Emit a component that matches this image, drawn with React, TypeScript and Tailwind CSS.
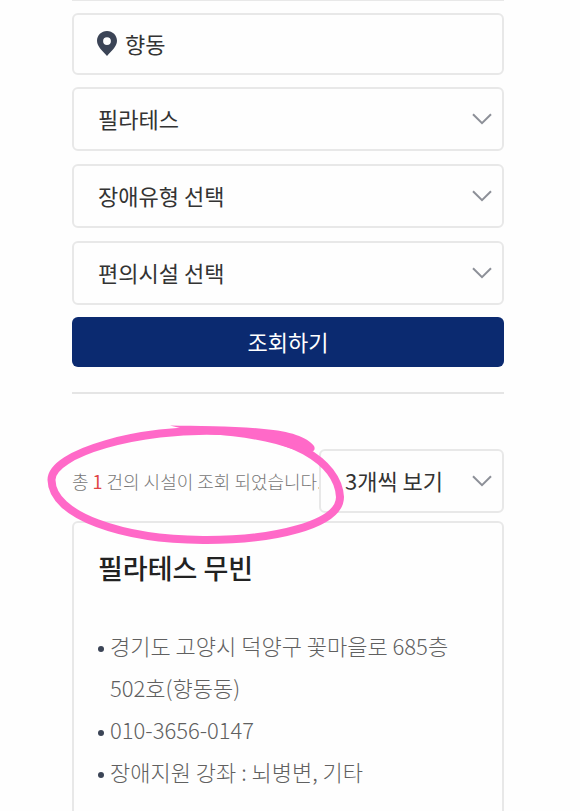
import { useState } from "react";

type Option = { value: string; label: string };

const filters: { name: string; label: string; options: Option[] }[] = [
  { name: "sport", label: "종목", options: [{ value: "pilates", label: "필라테스" }] },
  { name: "disability", label: "장애유형", options: [{ value: "", label: "장애유형 선택" }] },
  { name: "amenity", label: "편의시설", options: [{ value: "", label: "편의시설 선택" }] },
];

const details = [
  "경기도 고양시 덕양구 꽃마을로 685층 502호(향동동)",
  "010-3656-0147",
  "장애지원 강좌 : 뇌병변, 기타",
];

function SelectBox({ name, label, options }: { name: string; label: string; options: Option[] }) {
  return (
    <div className="grid w-full items-center">
      <select
        name={name}
        aria-label={label}
        className="col-start-1 row-start-1 h-16 w-full appearance-none rounded-md border-2 border-[#e8e8e8] bg-transparent px-6 pb-0.5 text-[22px] text-[#333]"
      >
        {options.map((option) => (
          <option key={option.value} value={option.value}>
            {option.label}
          </option>
        ))}
      </select>
      <svg
        viewBox="0 0 20 12"
        className="pointer-events-none col-start-1 row-start-1 mr-3 h-3 w-5 justify-self-end"
        fill="none"
        stroke="#8d9098"
        strokeWidth="2"
      >
        <path d="M1 1.2 10 10.2 19 1.2" />
      </svg>
    </div>
  );
}

function PinIcon() {
  return (
    <svg viewBox="0 0 20 25" className="h-[25px] w-5 shrink-0" fill="#3b4456">
      <path
        fillRule="evenodd"
        d="M10 0C4.400 0 0 4.400 0 9.800c0 6 6.200 10.700 10 15.200 3.800-4.500 10-9.200 10-15.200C20 4.400 15.600 0 10 0Zm0 6.200a3.900 3.900 0 1 1 0 7.800 3.900 3.900 0 0 1 0-7.800Z"
      />
    </svg>
  );
}

// hand-drawn marker ring around the result count
function MarkerRing() {
  return (
    <svg
      viewBox="0 0 304 128"
      className="pointer-events-none absolute -top-7 -left-6 h-32 w-[304px] overflow-visible"
      fill="none"
      stroke="#ff69c8"
      strokeWidth="8"
    >
      <path d="M172 10C92 7 3 32 3.500 59C4 95 75 118.500 155 119C225 119.500 292 104 292 76C290 40 240 11 172 10Z" />
      <path
        d="M122 4.500C150 5 190 5 216 8C242 10 259 16 266 25C268 29 265 32 260 30C256 27 250 23 243 22L247 29C225 21 195 15 160 13L140 9Z"
        fill="#ff69c8"
        stroke="none"
      />
    </svg>
  );
}

export default function App() {
  const [area, setArea] = useState("향동");

  return (
    <main className="bg-[#fefefe] pr-[76px] pl-[72px] font-['Noto_Sans_CJK_KR','Noto_Sans',sans-serif] text-[#333]">
      <form className="border-t border-[#e8e8e8]" onSubmit={(e) => e.preventDefault()}>
        <div className="my-3 flex h-[62px] items-center gap-2 rounded-md border-2 border-[#e8e8e8] px-[23px] pb-0.5">
          <PinIcon />
          <input
            type="text"
            aria-label="지역"
            value={area}
            onChange={(e) => setArea(e.target.value)}
            className="w-full min-w-0 bg-transparent text-[22px] outline-none"
          />
        </div>
        <div className="flex flex-col gap-[13px]">
          {filters.map((filter) => (
            <SelectBox key={filter.name} {...filter} />
          ))}
        </div>
        <button type="submit" className="mt-3 h-[50px] w-full rounded-md bg-[#0b2a70] pb-0.5 text-[22px] text-white">
          조회하기
        </button>
      </form>

      <section className="mt-[25px] border-t-2 border-[#e5e5e5] pt-[55px]">
        <div className="relative flex items-center">
          <p className="w-0 grow text-lg font-light whitespace-nowrap text-[#777]">
            총 <span className="font-normal text-[#e04545]">1</span> 건의 시설이 조회 되었습니다.
          </p>
          <div className="w-[185px] shrink-0">
            <SelectBox name="pageSize" label="보기 개수" options={[{ value: "3", label: "3개씩 보기" }]} />
          </div>
          <MarkerRing />
        </div>

        <article className="mt-2 rounded-t-md border-2 border-b-0 border-[#e8e8e8] px-6 pt-6 pb-9">
          <h2 className="text-[27px] leading-[42px] font-medium text-[#222]">필라테스 무빈</h2>
          <ul className="mt-[35px] text-[22px] leading-[42px] font-light text-[#606060]">
            {details.map((detail) => (
              <li key={detail} className="flex gap-1.5">
                <span className="mt-[22px] size-1.5 shrink-0 rounded-full bg-[#3b4456]" />
                {detail}
              </li>
            ))}
          </ul>
        </article>
      </section>
    </main>
  );
}
